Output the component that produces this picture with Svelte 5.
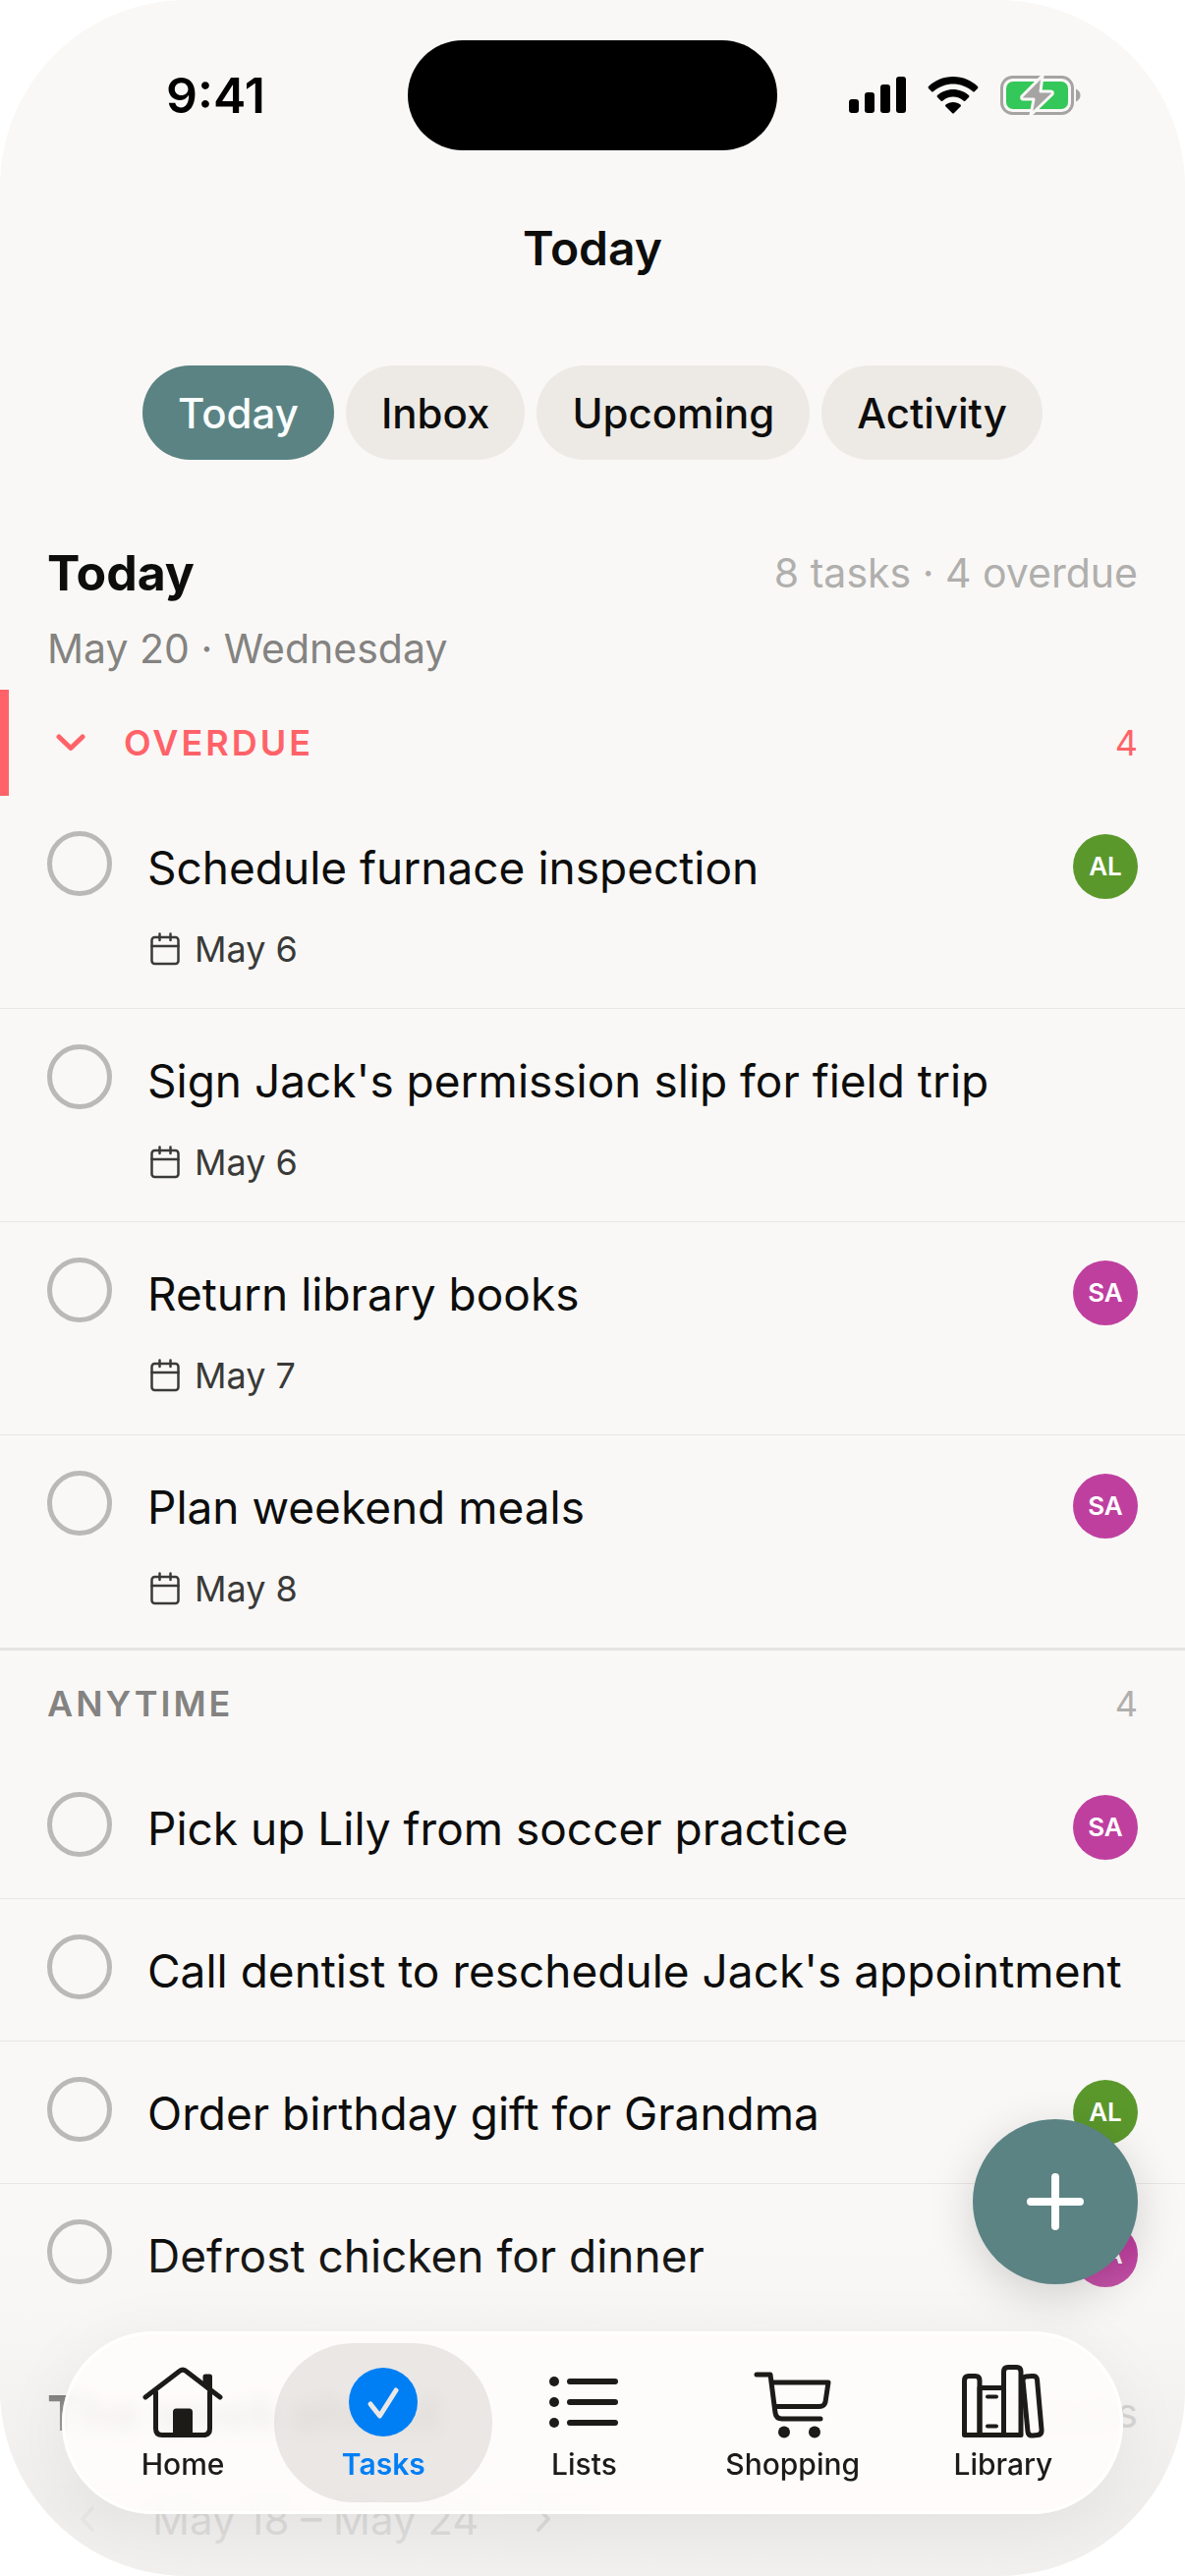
<script lang="ts">
    interface Task {
        id: string;
        title: string;
        due?: string;
        who?: string;
    }

    const views = ["Today", "Inbox", "Upcoming", "Activity"];
    const tabs = ["Home", "Tasks", "Lists", "Shopping", "Library"];

    const overdue: Task[] = [
        { id: "furnace", title: "Schedule furnace inspection", due: "May 6", who: "AL" },
        { id: "slip", title: "Sign Jack's permission slip for field trip", due: "May 6" },
        { id: "books", title: "Return library books", due: "May 7", who: "SA" },
        { id: "meals", title: "Plan weekend meals", due: "May 8", who: "SA" },
    ];

    const anytime: Task[] = [
        { id: "soccer", title: "Pick up Lily from soccer practice", who: "SA" },
        { id: "dentist", title: "Call dentist to reschedule Jack's appointment" },
        { id: "gift", title: "Order birthday gift for Grandma", who: "AL" },
        { id: "chicken", title: "Defrost chicken for dinner", who: "SA" },
    ];

    let view = $state("Today");
    let tab = $state("Tasks");
    let overdueOpen = $state(true);
</script>

{#snippet taskRow(task: Task)}
    <li class="task">
        <input type="checkbox" id={task.id}>
        <div class="task-body">
            <label for={task.id}>{task.title}</label>
            {#if task.due}
                <div class="due">
                    <svg width="30" height="34" viewBox="0 0 30 34" fill="none" stroke="currentColor" stroke-width="2.5" stroke-linecap="round">
                        <rect x="1.5" y="5" width="27" height="27" rx="3" />
                        <path d="M1.5 14H28.5M9.5 1.5V8M20.5 1.5V8" />
                    </svg>
                    <span>{task.due}</span>
                </div>
            {/if}
        </div>
        {#if task.who}
            <span class="avatar" class:green={task.who === "AL"}>{task.who}</span>
        {/if}
    </li>
{/snippet}

<div class="screen">
    <div class="status">
        <span class="clock">9:41</span>
        <div class="island"></div>
        <div class="indicators">
            <svg width="58" height="38" viewBox="0 0 58 38">
                <rect x="0" y="23" width="10" height="14" rx="3" />
                <rect x="16" y="16" width="10" height="21" rx="3" />
                <rect x="32" y="8" width="10" height="29" rx="3" />
                <rect x="48" y="0" width="10" height="37" rx="3" />
            </svg>
            <svg width="52" height="38" viewBox="0 0 52 38">
                <path d="M26 0C36 0 45 4 51 10Q52 11 51 12L48 15Q47 16 46 15C40 10 33 7.500 26 7.500S12 10 6 15Q5 16 4 15L1 12Q0 11 1 10C7 4 16 0 26 0Z" />
                <path d="M26 13C32 13 38 15.500 42 19Q43 20 42 21L38.500 24.500Q37.500 25.500 36.500 24.500C33.500 22 30 20.500 26 20.500S18.500 22 15.500 24.500Q14.500 25.500 13.500 24.500L10 21Q9 20 10 19C14 15.500 20 13 26 13Z" />
                <path d="M26 26C29 26 31.500 27 33.500 28.500Q34.500 29.500 33.500 30.500L27 37Q26 38 25 37L18.500 30.500Q17.500 29.500 18.500 28.500C20.500 27 23 26 26 26Z" />
            </svg>
            <svg width="82" height="42" viewBox="0 0 82 42">
                <rect x="1.500" y="2.500" width="72" height="37" rx="11" fill="none" stroke="#a5a4a3" stroke-width="3" />
                <path d="M77 14.500C80 16 81.500 18 81.500 21S80 26 77 27.500Z" fill="#a5a4a3" />
                <rect x="6" y="7" width="63" height="28" rx="7" fill="#34c759" />
                <path d="M43 1L22 22Q21 25 23.500 25H34L31 41L53 20Q54 17 51.500 17H41Z" fill="#a5a4a3" stroke="#f9f8f6" stroke-width="3" stroke-linejoin="round" />
            </svg>
        </div>
    </div>

    <header class="navbar">
        <h1>Today</h1>
    </header>

    <div class="views">
        {#each views as name}
            <button class="chip" class:active={view === name} onclick={() => (view = name)}>{name}</button>
        {/each}
    </div>

    <main>
        <div class="day">
            <div class="day-top">
                <h2>Today</h2>
                <span class="summary">8 tasks · 4 overdue</span>
            </div>
            <p>May 20 · Wednesday</p>
        </div>

        <section>
            <div class="group late">
                <button class="toggle" aria-label="Toggle overdue" onclick={() => (overdueOpen = !overdueOpen)}>
                    <svg width="30" height="18" viewBox="0 0 30 18" fill="none" stroke="currentColor" stroke-width="5" stroke-linecap="round" stroke-linejoin="round">
                        <path d="M3 3L15 14.500L27 3" />
                    </svg>
                </button>
                <h3>OVERDUE</h3>
                <span>4</span>
            </div>
            {#if overdueOpen}
                <ul>
                    {#each overdue as task}
                        {@render taskRow(task)}
                    {/each}
                </ul>
            {/if}
        </section>

        <section class="ruled">
            <div class="group">
                <h3>ANYTIME</h3>
                <span>4</span>
            </div>
            <ul>
                {#each anytime as task}
                    {@render taskRow(task)}
                {/each}
            </ul>
        </section>

        <div class="day">
            <div class="day-top">
                <h2>The week ahead</h2>
                <span class="summary">4 tasks</span>
            </div>
            <div class="week">
                <button class="faint" aria-label="Previous week">
                    <svg width="16" height="28" viewBox="0 0 16 28" fill="none" stroke="currentColor" stroke-width="4" stroke-linecap="round" stroke-linejoin="round">
                        <path d="M13 3L3 14L13 25" />
                    </svg>
                </button>
                <span>May 18 – May 24</span>
                <button aria-label="Next week">
                    <svg width="16" height="28" viewBox="0 0 16 28" fill="none" stroke="currentColor" stroke-width="4" stroke-linecap="round" stroke-linejoin="round">
                        <path d="M3 3L13 14L3 25" />
                    </svg>
                </button>
            </div>
        </div>
    </main>

    <div class="fade"></div>

    <button class="add" aria-label="Add task">
        <svg width="60" height="60" viewBox="0 0 60 60" fill="none" stroke="#fff" stroke-width="8" stroke-linecap="round">
            <path d="M30 5V55M5 30H55" />
        </svg>
    </button>

    <nav class="tabbar">
        {#each tabs as name}
            <a href="#{name.toLowerCase()}" class:active={tab === name} onclick={() => (tab = name)}>
                <svg width="84" height="76" viewBox="0 0 84 76" fill="none" stroke="currentColor" stroke-width="5" stroke-linecap="round" stroke-linejoin="round">
                    {#if name === "Home"}
                        <path d="M4 34L38 8Q42 4 46 8L80 34" />
                        <path d="M14.500 29V66Q14.500 72.500 21 72.500H63Q69.500 72.500 69.500 66V29" />
                        <path d="M65 13H69.500V26L65 22Z" fill="currentColor" />
                        <rect x="34.500" y="48" width="15" height="24" rx="1" fill="currentColor" />
                    {:else if name === "Tasks"}
                        <circle cx="42" cy="39" r="35" fill="currentColor" stroke="none" />
                        <path d="M29 41L38.500 53L55 27" stroke="#ebe8e6" />
                    {:else if name === "Lists"}
                        <g fill="currentColor" stroke="none">
                            <circle cx="12" cy="18" r="5" />
                            <circle cx="12" cy="39" r="5" />
                            <circle cx="12" cy="60" r="5" />
                        </g>
                        <path d="M28 18H74M28 39H74M28 60H74" stroke-width="6" />
                    {:else if name === "Shopping"}
                        <path d="M5 11H19L24 50Q25 56 31 56H70" />
                        <path d="M20.500 19H78L75 39Q74 43.500 69 43.500H23.500" />
                        <g fill="currentColor" stroke="none">
                            <circle cx="33" cy="69.500" r="6" />
                            <circle cx="64" cy="69.500" r="6" />
                        </g>
                    {:else}
                        <path d="M2.500 72.500V17Q2.500 12.500 7 12.500H13.500Q18 12.500 18 17V72.500Z" />
                        <path d="M18 24.500H42.500V72.500H18Z" />
                        <path d="M42.500 72.500V8Q42.500 3.500 47 3.500H55.500Q60 3.500 60 8V72.500Z" />
                        <path d="M62 17Q62 13.500 65 13L71 12.500Q76 12 76.500 16L81 67Q81.500 72 77 72.500L72 73Q67.500 73.500 67 69Z" />
                        <path d="M26 33.500H35M26 63.500H35" stroke-width="4" />
                    {/if}
                </svg>
                <span>{name}</span>
            </a>
        {/each}
    </nav>
</div>

<style>
    :global(body) {
        background: #fff;
    }

    .screen {
        position: relative;
        display: flex;
        flex-direction: column;
        height: 100vh;
        overflow: hidden;
        border-radius: 190px;
        background: #f9f8f6;
        color: #0d0d0c;
        font-family: Inter, "Liberation Sans", sans-serif;
        font-size: 46px;
    }

    h1, h2, h3, p, ul {
        margin: 0;
        padding: 0;
        font-size: inherit;
    }

    button {
        font: inherit;
        border: none;
        padding: 0;
        cursor: pointer;
    }

    svg {
        display: block;
        flex: none;
    }

    .status {
        display: grid;
        grid-template-columns: 1fr 376px 1fr;
        align-items: center;
        height: 112px;
        margin-top: 41px;
        color: #000;
    }

    .clock {
        padding-left: 24px;
        text-align: center;
        font-size: 50px;
        font-weight: 600;
    }

    .island {
        height: 112px;
        border-radius: 56px;
        background: #000;
    }

    .indicators {
        display: flex;
        align-items: center;
        justify-content: flex-end;
        gap: 22px;
        padding-right: 106px;
    }

    .navbar {
        display: flex;
        align-items: center;
        justify-content: center;
        height: 132px;
        margin-top: 33px;
    }

    .navbar h1 {
        font-size: 48px;
        font-weight: 600;
    }

    .views {
        display: flex;
        justify-content: center;
        gap: 12px;
        padding: 54px 0 26px;
    }

    .chip {
        height: 96px;
        padding: 0 36px;
        border-radius: 48px;
        background: #edeae6;
        color: #0d0d0c;
        font-size: 42px;
        font-weight: 500;
    }

    .chip.active {
        background: #5b8383;
        color: #fafefe;
    }

    .day {
        padding: 56px 48px 15px;
    }

    .day-top {
        display: flex;
        align-items: center;
        justify-content: space-between;
        line-height: 66px;
    }

    .day h2 {
        font-size: 50px;
        font-weight: 700;
    }

    .summary {
        color: #b0afad;
        font-size: 41px;
    }

    .day p {
        margin-top: 17px;
        color: #848381;
        font-size: 41px;
        line-height: 54px;
    }

    .group {
        display: flex;
        align-items: center;
        height: 108px;
        padding: 0 48px;
        color: #848381;
        font-size: 36px;
    }

    .group h3 {
        flex: 1;
        font-weight: 600;
        letter-spacing: 3px;
    }

    .group span {
        color: #b0afad;
    }

    .group.late {
        box-shadow: inset 9px 0 #ff6369;
    }

    .group.late, .group.late span {
        color: #ff6369;
    }

    .toggle {
        display: flex;
        justify-content: center;
        width: 48px;
        margin-right: 30px;
        background: none;
        color: inherit;
    }

    ul {
        list-style: none;
    }

    .ruled {
        border-top: 3px solid #e5e4e2;
    }

    .task {
        display: flex;
        align-items: flex-start;
        padding: 36px 48px;
        border-bottom: 1px solid #e8e7e5;
    }

    .task:last-child {
        border-bottom: none;
    }

    .task input {
        flex: none;
        appearance: none;
        width: 66px;
        height: 66px;
        margin: 0 36px 0 0;
        border: 5px solid #bab9b7;
        border-radius: 50%;
    }

    .task input:checked {
        background: #5b8383;
    }

    .task-body {
        flex: 1;
        white-space: nowrap;
    }

    .task label {
        display: block;
        line-height: 74px;
    }

    .due {
        display: flex;
        align-items: center;
        gap: 15px;
        margin-top: 22px;
        padding-left: 3px;
        color: #3a3a38;
        font-size: 36px;
        line-height: 48px;
    }

    .task > .task-body {
        margin-bottom: -2px;
    }

    .due {
        margin-bottom: 2px;
    }

    .avatar {
        flex: none;
        width: 66px;
        height: 66px;
        margin-top: 3px;
        border-radius: 50%;
        background: #bf3f9f;
        color: #fff;
        font-size: 26px;
        font-weight: 600;
        line-height: 66px;
        text-align: center;
    }

    .avatar.green {
        background: #5b982c;
    }

    .week {
        display: flex;
        align-items: center;
        gap: 25px;
        margin-top: 39px;
        color: #848381;
        font-size: 42px;
    }

    .week button {
        display: flex;
        align-items: center;
        justify-content: center;
        width: 82px;
        height: 72px;
        border-radius: 12px;
        background: #f6f5f3;
        color: #848381;
    }

    .week button.faint {
        color: #d0cfcd;
    }

    .fade {
        position: absolute;
        inset: auto 0 0;
        height: 340px;
        background: linear-gradient(rgba(241, 240, 238, 0), rgba(240, 239, 237, 0.2) 25%, rgba(239, 238, 236, 0.58) 50%, rgba(237, 236, 235, 0.8) 80%, rgba(241, 240, 239, 0.9));
        pointer-events: none;
    }

    .add {
        position: absolute;
        right: 48px;
        bottom: 297px;
        display: flex;
        align-items: center;
        justify-content: center;
        width: 168px;
        height: 168px;
        border-radius: 50%;
        background: #5b8383;
        box-shadow: 0 12px 48px rgba(0, 0, 0, 0.16);
    }

    .tabbar {
        position: absolute;
        right: 63px;
        bottom: 63px;
        left: 63px;
        display: grid;
        grid-template-columns: 204fr 204fr 204fr 220fr 208fr;
        padding: 12px 18px 12px 21px;
        border-radius: 93px;
        background: rgba(255, 253, 252, 0.88);
        backdrop-filter: blur(8px);
        box-shadow: inset 0 0 0 3px rgba(255, 255, 255, 0.8), 0 12px 72px rgba(0, 0, 0, 0.06);
    }

    .tabbar a {
        display: flex;
        flex-direction: column;
        align-items: center;
        gap: 8px;
        height: 162px;
        box-sizing: border-box;
        padding-top: 21px;
        border-radius: 81px;
        color: #1c1b18;
        font-size: 30px;
        font-weight: 500;
        line-height: 36px;
        text-decoration: none;
    }

    .tabbar a.active {
        margin: 0 -9px;
        background: rgba(90, 75, 65, 0.12);
        color: #007ff5;
        font-weight: 600;
    }
</style>
